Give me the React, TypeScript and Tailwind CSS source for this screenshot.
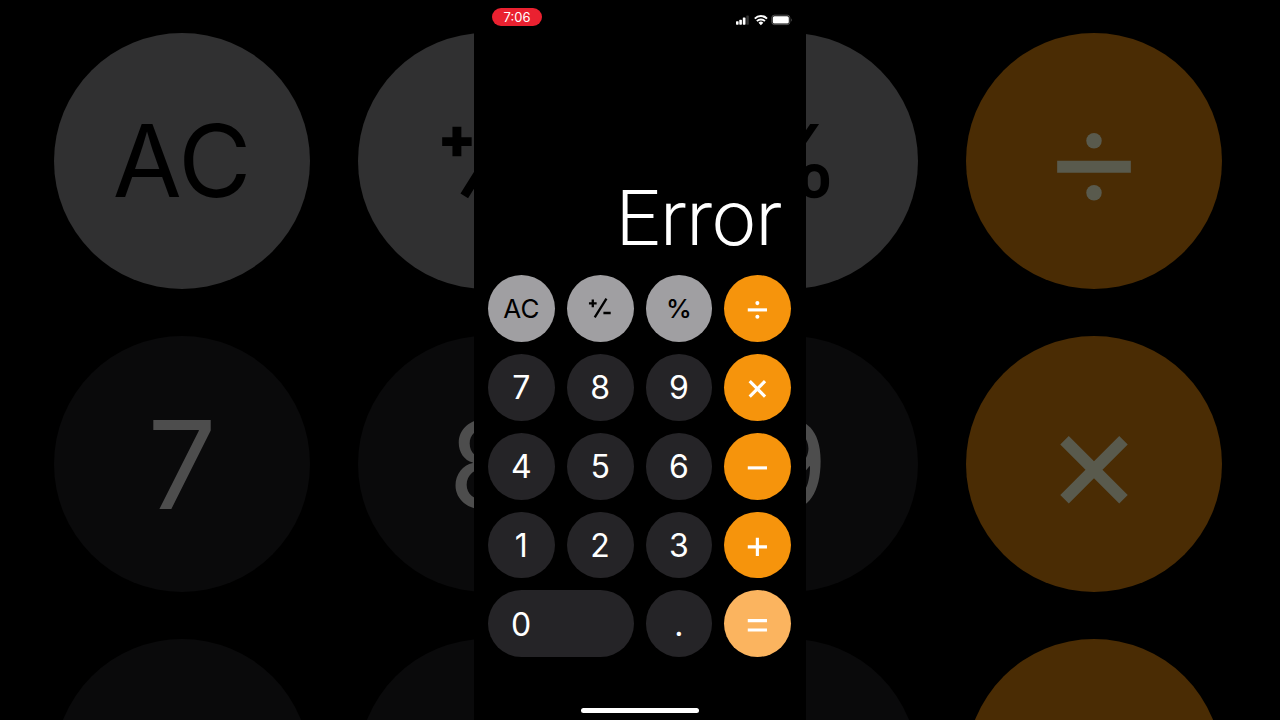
import { clsx } from "clsx";

type Kind = "function" | "digit" | "operator" | "active";

type KeyDef = {
  name: string;
  kind: Kind;
  text?: string;
  icon?: "sign" | "divide" | "times" | "minus" | "plus" | "equals";
  wide?: boolean;
};

const keys: KeyDef[] = [
  { name: "All clear", kind: "function", text: "AC" },
  { name: "Toggle sign", kind: "function", icon: "sign" },
  { name: "Percent", kind: "function", text: "%" },
  { name: "Divide", kind: "operator", icon: "divide" },
  { name: "7", kind: "digit", text: "7" },
  { name: "8", kind: "digit", text: "8" },
  { name: "9", kind: "digit", text: "9" },
  { name: "Multiply", kind: "operator", icon: "times" },
  { name: "4", kind: "digit", text: "4" },
  { name: "5", kind: "digit", text: "5" },
  { name: "6", kind: "digit", text: "6" },
  { name: "Subtract", kind: "operator", icon: "minus" },
  { name: "1", kind: "digit", text: "1" },
  { name: "2", kind: "digit", text: "2" },
  { name: "3", kind: "digit", text: "3" },
  { name: "Add", kind: "operator", icon: "plus" },
  { name: "0", kind: "digit", text: "0", wide: true },
  { name: "Decimal point", kind: "digit", text: "." },
  { name: "Equals", kind: "active", icon: "equals" },
];

const keyColors: Record<Kind, string> = {
  function: "bg-[#a09fa2] text-black text-[26px]",
  digit: "bg-[#252427] text-white text-[32px] pt-0.5",
  operator: "bg-[#f6940c] text-white",
  active: "bg-[#fbb45f] text-white",
};

const backdropColors: Record<Kind, string> = {
  function: "bg-[#303031] text-black text-[100px]",
  digit: "bg-[#0a0a0b] text-[#4d4d4d] text-[122px] pt-0.5",
  operator: "bg-[#4a2c04] text-[#595a4d]",
  active: "bg-[#4a2c04] text-[#595a4d]",
};

const iconPaths = {
  sign: "M25.5 24.2v7.6M21.7 28h7.6M27.4 42L39 23.4M36 37.6h7.2",
  divide: "M23.5 34.5h19",
  times: "M25.4 26.9l15.2 15.2M40.6 26.9L25.4 42.1",
  minus: "M23.5 34.5h19",
  plus: "M23.5 34.5h19M33 25.5v18",
  equals: "M23.5 30.3h19M23.5 39.5h19",
};

// Icons are drawn on the full face of a key, so they grow with it
function KeyIcon({ icon }: { icon: keyof typeof iconPaths }) {
  return (
    <svg viewBox="0 0 66 66" className="size-full" aria-hidden="true">
      <path
        d={iconPaths[icon]}
        fill="none"
        stroke="currentColor"
        strokeWidth={icon === "sign" ? 2.3 : 3.1}
      />
      {icon === "divide" && (
        <g fill="currentColor">
          <circle cx="33" cy="27.8" r="2" />
          <circle cx="33" cy="41.2" r="2" />
        </g>
      )}
    </svg>
  );
}

function Backdrop() {
  return (
    <div
      aria-hidden="true"
      className="absolute inset-0 grid grid-cols-4 content-start gap-x-12 gap-y-[47px] overflow-hidden pt-[33px] pr-[58px] pl-[54px]"
    >
      {keys.slice(0, 12).map((key, i) => (
        <div
          key={key.name}
          className={clsx(
            "flex aspect-square items-center justify-center rounded-full leading-none",
            key.text === "%" && "font-medium",
            backdropColors[key.kind]
          )}
        >
          {/* third row only shows the top of each key */}
          {i < 8 && (key.icon ? <KeyIcon icon={key.icon} /> : key.text)}
        </div>
      ))}
    </div>
  );
}

function StatusBar() {
  return (
    <header className="flex items-start justify-between pt-2 pr-[14px] pl-[18px]">
      <span className="flex h-[18px] w-[50px] items-center justify-center rounded-full bg-[#ea2130] text-[13px] leading-none text-white">
        7:06
      </span>
      <svg
        viewBox="0 0 58 12"
        className="mt-1.5 h-3 w-[58px]"
        role="img"
        aria-label="Signal, Wi-Fi and battery"
      >
        <g fill="#fff">
          <rect x="2" y="7.2" width="2.6" height="3.5" rx="0.6" />
          <rect x="5.3" y="5.8" width="2.6" height="4.9" rx="0.6" />
          <rect x="8.8" y="3.5" width="2.7" height="7.2" rx="0.6" />
          <rect x="12.3" y="1.5" width="2.5" height="9.2" rx="0.6" opacity="0.2" />
          <path d="M26.9 11.2l-2.4-2.5a3.4 3.4 0 0 1 4.8 0z" />
          <rect x="38.8" y="2.2" width="16" height="7.4" rx="1.6" />
          <path d="M57 4.4c.8.3.8 2.7 0 3z" opacity="0.4" />
        </g>
        <g fill="none" stroke="#fff">
          <path d="M20.8 4.6a8.6 8.6 0 0 1 12.2 0" strokeWidth="2" />
          <path d="M22.9 7.2a5.5 5.5 0 0 1 8 0" strokeWidth="1.9" />
          <rect
            x="37.8"
            y="1.2"
            width="18"
            height="9.4"
            rx="2.5"
            strokeWidth="0.8"
            opacity="0.4"
          />
        </g>
      </svg>
    </header>
  );
}

export default function App() {
  return (
    <div className="relative flex min-h-screen justify-center overflow-hidden bg-black font-['Inter',sans-serif]">
      <Backdrop />
      <main className="relative flex w-[332px] flex-col bg-black">
        <StatusBar />
        <div className="flex flex-1 items-end justify-end pr-6 pb-[14px]">
          <output className="font-['Roboto',sans-serif] text-[78px] leading-[84px] font-light text-white">
            Error
          </output>
        </div>
        <div className="grid grid-cols-4 gap-3 pr-[15px] pl-[14px]">
          {keys.map((key) => (
            <button
              key={key.name}
              type="button"
              aria-label={key.name}
              className={clsx(
                "flex items-center rounded-full leading-none",
                key.wide
                  ? "col-span-2 justify-start pl-[23px]"
                  : "aspect-square justify-center",
                key.text === "%" && "font-medium",
                keyColors[key.kind]
              )}
            >
              {key.icon ? <KeyIcon icon={key.icon} /> : key.text}
            </button>
          ))}
        </div>
        <footer className="flex justify-center pt-[51px] pb-[7px]">
          <div className="h-[5px] w-[118px] rounded-full bg-white" />
        </footer>
      </main>
    </div>
  );
}
